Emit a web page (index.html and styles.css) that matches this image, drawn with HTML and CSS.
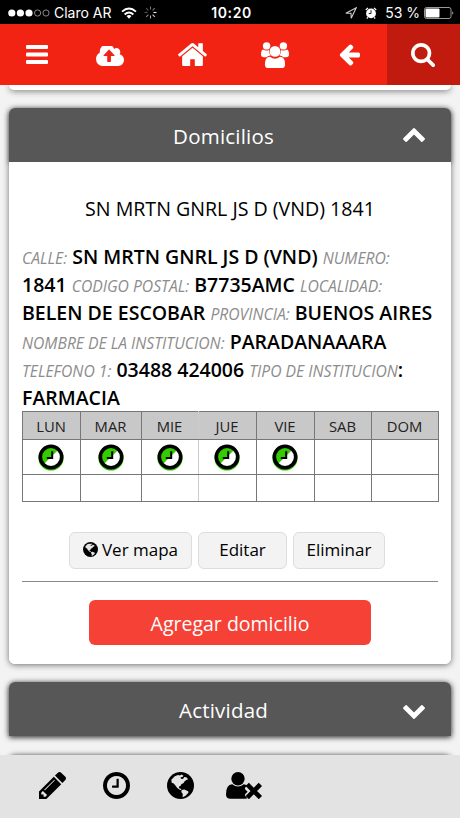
FILE: index.html
```
<!DOCTYPE html>
<html lang="es">
<head>
<meta charset="utf-8">
<title>Domicilios</title>
<link rel="stylesheet" href="styles.css">
</head>
<body>
<svg class="defs" aria-hidden="true">
  <symbol id="clock" viewBox="128 128 1536 1536"><path d="M1024 544v448q0 14-9 23t-23 9h-320q-14 0-23-9t-9-23v-64q0-14 9-23t23-9h224v-352q0-14 9-23t23-9h64q14 0 23 9t9 23zm416 352q0-148-73-273t-198-198-273-73-273 73-198 198-73 273 73 273 198 198 273 73 273-73 198-198 73-273zm224 0q0 209-103 385.5t-279.5 279.5-385.5 103-385.5-103-279.5-279.5-103-385.5 103-385.5 279.5-279.5 385.5-103 385.5 103 279.5 279.5 103 385.5z"/></symbol>
  <symbol id="turno" viewBox="0 0 26 27"><circle cx="13" cy="14" r="12.6" fill="#3c0"/><circle cx="13" cy="13" r="10.7" fill="#fff"/><path d="M5.4 20.6A10.7 10.7 0 0 1 20.6 5.4Z" fill="#3c0"/><circle cx="13" cy="13" r="10.7" fill="none" stroke="#000" stroke-width="3.6"/><path d="M14.2 7.2V14H8.8" fill="none" stroke="#000" stroke-width="2"/></symbol>
  <symbol id="globe" viewBox="0 0 26 26"><circle cx="13" cy="13" r="13"/><path class="land" d="M4.2 7.5L7.5 4l3-1 2 .3 1.4-.8 2 1-1 1.3-1.8.2.3 1.5 2 .2 1.2-1.8 2 .2 1.8 2-1.8.6-1.6 1.2-1 1.7-2.2 1.2-.8 1.8-1.5.3.2 1.7 1.6.5.8 1.5-1.8-.4-2.4-1.8-2-2.6L6.500 11l-2-.6z"/><path class="land" d="M14.200 17.300l2.400-.4 3.800 1.700.2 1.500-3 3-2.600 1.100.2-3-1.400-2z"/></symbol>
</svg>

<header class="status">
  <div class="status-side">
    <svg width="42" height="10" viewBox="0 0 42 10"><g fill="#fff"><circle cx="3.800" cy="5" r="3.600"/><circle cx="12.400" cy="5" r="3.600"/><circle cx="21" cy="5" r="3.600"/></g><g fill="none" stroke="#aaa" stroke-width=".8"><circle cx="29.600" cy="5" r="3.100"/><circle cx="38" cy="5" r="3.100"/></g></svg>
    <span class="carrier">Claro AR</span>
    <svg class="wifi" width="16" height="12" viewBox="0 0 16 12"><g fill="none" stroke="#fff" stroke-width="1.900"><path d="M1 4.600Q8-1.600 15 4.600"/><path d="M3.600 7.500Q8 3.700 12.400 7.500"/></g><path d="M5.500 9Q8 7.200 10.500 9L8 11.700z" fill="#fff"/></svg>
    <svg class="spinner" width="13" height="13" viewBox="-6.500 -6.500 13 13"><g stroke-width="1.100"><path d="M0-3V-6" stroke="#777"/><path d="M2.100-2.100L4.300-4.300" stroke="#777"/><path d="M3 0H6" stroke="#eee"/><path d="M2.100 2.100L4.300 4.300" stroke="#ccc"/><path d="M0 3V6" stroke="#aaa"/><path d="M-2.100 2.100L-4.300 4.300" stroke="#888"/><path d="M-3 0H-6" stroke="#555"/><path d="M-2.100-2.100L-4.300-4.300" stroke="#555"/></g></svg>
  </div>
  <span class="time">10:20</span>
  <div class="status-side right">
    <svg width="12" height="12" viewBox="0 0 12 12"><path d="M.8 6.300L11.200.8 6.200 11.200 6 6.300z" fill="none" stroke="#ccc" stroke-width="1.100"/></svg>
    <svg class="alarm" width="12" height="12" viewBox="0 0 12 12"><circle cx="6" cy="6.400" r="4.900" fill="#fff"/><path d="M.8 3L3 .9M9 .9l2.200 2.100M2.800 10.300l-1 1.200M9.200 10.300l1 1.200" stroke="#fff" stroke-width="1.300"/><path d="M6 3.200V6.600H3.700" fill="none" stroke="#000" stroke-width=".9"/></svg>
    <span class="percent">53 %</span>
    <svg width="31" height="12" viewBox="0 0 31 12"><rect x=".5" y=".5" width="26.500" height="11" rx="2" fill="none" stroke="#999"/><rect x="1.500" y="1.500" width="14" height="9" rx="1" fill="#fff"/><path d="M28.500 4q1.600 2 0 4z" fill="#fff"/></svg>
  </div>
</header>

<nav class="nav">
  <a class="nav-item menu"><svg width="22" height="19" viewBox="0 0 22 19"><path d="M1 0h20q1 0 1 1v2q0 1-1 1H1Q0 4 0 3V1q0-1 1-1zm0 7.500h20q1 0 1 1v2q0 1-1 1H1q-1 0-1-1v-2q0-1 1-1zM1 15h20q1 0 1 1v2q0 1-1 1H1q-1 0-1-1v-2q0-1 1-1z"/></svg></a>
  <a class="nav-item cloud"><svg width="28" height="20" viewBox="-64 256 1920 1280" preserveAspectRatio="none"><path d="M1216 864q0-14-9-23l-352-352q-9-9-23-9t-23 9l-351 351q-10 12-10 24 0 14 9 23t23 9h224v352q0 13 9.500 22.500t22.500 9.500h192q13 0 22.500-9.500t9.500-22.500v-352h224q13 0 22.500-9.500t9.500-22.500zm640 288q0 159-112.500 271.500t-271.500 112.500h-1088q-185 0-316.500-131.500t-131.500-316.500q0-130 70-240t188-165q-2-30-2-43 0-212 150-362t362-150q156 0 285.500 87t188.500 231q71-62 166-62 106 0 181 75t75 181q0 76-41 138 130 31 213.500 135.500t83.500 238.500z"/></svg></a>
  <a class="nav-item home"><svg width="29" height="23" viewBox="89 246 1614 1290" preserveAspectRatio="none"><path d="M1472 992v480q0 26-19 45t-45 19h-384v-384h-256v384h-384q-26 0-45-19t-19-45v-480q0-1 .5-3t.5-3l575-474 575 474q1 2 1 6zm223-69l-62 74q-8 9-21 11h-3q-13 0-21-7l-692-577-692 577q-12 8-24 7-13-2-21-11l-62-74q-8-10-7-23.500t11-21.500l719-599q32-26 76-26t76 26l244 204v-195q0-14 9-23t23-9h192q14 0 23 9t9 23v408l219 182q10 8 11 21.500t-7 23.500z"/></svg></a>
  <a class="nav-item people"><svg width="28" height="26" viewBox="0 0 28 26"><circle cx="5.600" cy="3.900" r="3.700"/><circle cx="22.400" cy="3.900" r="3.700"/><path d="M1.800 7.400Q5 9.300 8 8q-.2 3.200 1.600 5.400-2.600.2-4 1.900H3Q0 15.300 0 12.500 0 8.300 1.800 7.400zM26.200 7.400Q23 9.300 20 8q.2 3.200-1.600 5.400 2.600.2 4 1.900H25q3 0 3-2.800 0-4.200-1.800-5.100z"/><circle cx="14" cy="9.400" r="5.400"/><path d="M9 14.800q5 3.900 10 0 5.100.1 5.100 7.600 0 3.600-3.600 3.600h-13q-3.600 0-3.600-3.600 0-7.500 5.100-7.600z"/></svg></a>
  <a class="nav-item back"><svg width="21" height="22" viewBox="133 208 1531 1635" preserveAspectRatio="none"><path d="M1664 960v128q0 53-32.500 90.500t-84.500 37.500h-704l293 294q38 36 38 90t-38 90l-75 76q-37 37-90 37-52 0-91-37l-651-652q-37-37-37-90 0-52 37-91l651-650q38-38 91-38 52 0 90 38l75 74q38 38 38 91t-38 91l-293 293h704q52 0 84.500 37.500t32.500 90.500z"/></svg></a>
  <a class="nav-item search"><svg width="24" height="24" viewBox="64 128 1664 1664"><path d="M1216 832q0-185-131.500-316.500t-316.500-131.500-316.500 131.500-131.500 316.500 131.500 316.500 316.500 131.500 316.500-131.500 131.500-316.500zm512 832q0 52-38 90t-90 38q-54 0-90-38l-343-342q-179 124-399 124-143 0-273.500-55.500t-225-150-150-225-55.500-273.500 55.500-273.500 150-225 225-150 273.500-55.500 273.500 55.500 225 150 150 225 55.500 273.500q0 220-124 399l343 343q37 37 37 90z"/></svg></a>
</nav>

<main class="content">
  <section class="card previous"></section>
  <section class="card">
    <div class="card-head"><h2>Domicilios</h2>
      <svg class="chevron" width="22" height="14" viewBox="90 480 1612 1035" preserveAspectRatio="none"><path d="M1683 1331l-166 165q-19 19-45 19t-45-19l-531-531-531 531q-19 19-45 19t-45-19l-166-165q-19-19-19-45.500t19-45.500l742-741q19-19 45-19t45 19l742 741q19 19 19 45.500t-19 45.500z"/></svg></div>
    <div class="card-body">
      <h3>SN MRTN GNRL JS D (VND) 1841</h3>
      <p class="details"><i>CALLE:</i> SN MRTN GNRL JS D (VND) <i>NUMERO:</i><br>1841 <i>CODIGO POSTAL:</i> B7735AMC <i>LOCALIDAD:</i><br>BELEN DE ESCOBAR <i>PROVINCIA:</i> BUENOS AIRES<br><i>NOMBRE DE LA INSTITUCION:</i> PARADANAAARA<br><i>TELEFONO 1:</i> 03488 424006 <i>TIPO DE INSTITUCION</i>:<br>FARMACIA</p>
      <table class="week">
        <colgroup><col class="c1"><col class="c2"><col class="c3"><col class="c4"><col class="c5"><col class="c6"><col class="c7"></colgroup>
        <tr class="days"><th>LUN</th><th>MAR</th><th class="faint">MIE</th><th>JUE</th><th>VIE</th><th>SAB</th><th>DOM</th></tr>
        <tr class="morning"><td><svg><use href="#turno"/></svg></td><td><svg><use href="#turno"/></svg></td><td class="faint"><svg><use href="#turno"/></svg></td><td><svg><use href="#turno"/></svg></td><td><svg><use href="#turno"/></svg></td><td></td><td></td></tr>
        <tr class="afternoon"><td></td><td></td><td class="faint"></td><td></td><td></td><td></td><td></td></tr>
      </table>
      <div class="actions">
        <button class="btn map"><svg class="globe" width="15" height="15"><use href="#globe"/></svg>Ver mapa</button>
        <button class="btn edit">Editar</button>
        <button class="btn remove">Eliminar</button>
      </div>
      <div class="add-row"><button class="add">Agregar domicilio</button></div>
    </div>
  </section>
  <section class="card closed">
    <div class="card-head"><h2>Actividad</h2>
      <svg class="chevron down" width="22" height="14" viewBox="90 480 1612 1035" preserveAspectRatio="none"><path d="M1683 1331l-166 165q-19 19-45 19t-45-19l-531-531-531 531q-19 19-45 19t-45-19l-166-165q-19-19-19-45.500t19-45.500l742-741q19-19 45-19t45 19l742 741q19 19 19 45.500t-19 45.500z"/></svg></div>
  </section>
  <section class="card closed"><div class="card-head"></div></section>
</main>

<footer class="toolbar">
  <svg width="27" height="27" viewBox="128 149 1515 1515"><path d="M491 1536l91-91-235-235-91 91v107h128v128h107zm523-928q0-22-22-22-10 0-17 7l-542 542q-7 7-7 17 0 22 22 22 10 0 17-7l542-542q7-7 7-17zm-54-192l416 416-832 832h-416v-416zm683 96q0 53-37 90l-166 166-416-416 166-165q36-38 90-38 53 0 91 38l235 234q37 39 37 91z"/></svg>
  <svg class="t-clock" width="27" height="27"><use href="#clock"/></svg>
  <svg class="t-globe globe" width="27" height="27"><use href="#globe"/></svg>
  <svg class="t-user" width="36" height="27" viewBox="0 0 36 27"><circle cx="12" cy="6.800" r="6.700"/><path d="M6.200 12.200q5.800 4.400 11.600 0 2 .2 3.300 1.400l-1.800 1.800q-.8 1 0 2l2.300 2.300-2.300 2.400q-.8 1 0 2l2.200 2.200q-.8.400-2 .4H4.600Q0 26.700 0 22.500 0 12.500 6.200 12.200z"/><path d="M22.900 14.100L32.700 23.900M32.700 14.100L22.900 23.900" stroke="#000" stroke-width="4.700" stroke-linecap="square"/></svg>
</footer>
</body>
</html>
```
FILE: styles.css
```
* { box-sizing: border-box; }
html, body { margin: 0; height: 818px; overflow: hidden; }
body {
  display: flex;
  flex-direction: column;
  background: #f3f3f3;
  color: #000;
  font-family: "Open Sans", sans-serif;
}
svg { display: block; flex: none; }
.defs { position: absolute; width: 0; height: 0; }

.status {
  display: flex;
  align-items: center;
  flex: none;
  height: 24px;
  padding: 1px 5px 0 8px;
  background: #000;
  color: #fff;
  font: 14px/22px Inter, sans-serif;
  white-space: nowrap;
}
.status-side { display: flex; align-items: center; flex: 1 1 0; }
.status-side.right { justify-content: flex-end; }
.carrier { width: 60px; margin-left: 4px; }
.wifi { margin-left: 7px; }
.spinner { margin-left: 7px; }
.time { font-weight: 600; letter-spacing: .6px; }
.alarm { margin-left: 8px; }
.percent { margin: 0 4px 0 8px; }

.nav {
  display: grid;
  grid-template-columns: 73px 74px 92px 72px 76px 73px;
  flex: none;
  height: 61px;
  background: #f32314;
  fill: #fff;
}
.nav-item { display: flex; align-items: center; justify-content: center; }
.cloud { padding-top: 2px; }
.home { padding: 0 1px 1px 0; }
.search { background: #c01b0e; padding-right: 1px; }

.content { flex: 1; overflow: hidden; padding: 0 9px; }
.card {
  margin-bottom: 18px;
  border-radius: 6px;
  background: #fff;
  box-shadow: 0 1px 6px rgba(0, 0, 0, .55);
}
.previous { height: 5px; border-radius: 0 0 6px 6px; }
.card-head {
  display: grid;
  grid-template-columns: 1fr auto 1fr;
  align-items: center;
  height: 54px;
  border-radius: 6px 6px 0 0;
  background: #575757;
  color: #fff;
  box-shadow: 0 1px 5px rgba(0, 0, 0, .5);
}
.card-head h2 {
  grid-column: 2;
  margin: 1px 0 0 -13px;
  font-size: 20.5px;
  line-height: 28px;
  font-weight: 400;
  letter-spacing: .2px;
}
.chevron { justify-self: end; margin-right: 26px; fill: #fff; }
.down { transform: scaleY(-1); margin-top: 5px; }
.closed { border-radius: 6px 6px 0 0; margin-bottom: 19px; }

.card-body { height: 502px; padding: 33px 13px 0; background: #fff; border-radius: 0 0 6px 6px; position: relative; }
h3 { margin: 0; font-size: 19.6px; line-height: 28px; font-weight: 400; text-align: center; }
.details {
  margin: 20px 0 -1px;
  font-size: 19.5px;
  line-height: 28.2px;
  font-weight: 600;
  white-space: nowrap;
}
.details i { font-size: 15.7px; line-height: 0; font-weight: 400; color: #8c8c8c; }

.week { width: 416px; table-layout: fixed; border-collapse: collapse; border: 1px solid #777; }
.week th, .week td { padding: 0 1px 0 0; border: 1px solid #777; }
.week .faint { border-right-color: #ccc; }
.week th { background: #c8c8c8; font-size: 14.8px; font-weight: 400; color: #222; }
.week svg { width: 26px; height: 27px; margin: auto; }
.days { height: 28px; }
.morning { height: 35px; }
.afternoon { height: 27px; }
.c1 { width: 58px; }
.c2 { width: 61px; }
.c3 { width: 57px; }
.c4 { width: 58px; }
.c5 { width: 58px; }
.c6 { width: 57px; }
.c7 { width: 67px; }

.actions { display: flex; gap: 6px; margin: 30px 0 12px 47px; }
button { padding: 0; font-family: inherit; }
.btn {
  display: flex;
  align-items: center;
  justify-content: center;
  height: 37px;
  padding-bottom: 2px;
  border: 1px solid #ddd;
  border-radius: 6px;
  background: #f3f3f3;
  color: #000;
  font-size: 17px;
}
.map { width: 123px; gap: 4px; }
.edit { width: 89px; }
.remove { width: 92px; }
.land { fill: #e3e3e3; }
.add-row { border-top: 1px solid #888; padding: 18px 0 0 67px; }
.add { width: 282px; height: 45px; padding-top: 1px; border: 0; border-radius: 6px; background: #f64236; color: #fff; font-size: 19.5px; }

.toolbar {
  display: flex;
  flex: none;
  height: 63px;
  padding: 17px 0 0 39px;
  background: #e3e3e3;
}
.t-clock { margin-left: 37px; }
.t-globe { margin-left: 37px; }
.t-user { margin-left: 32px; }
```
